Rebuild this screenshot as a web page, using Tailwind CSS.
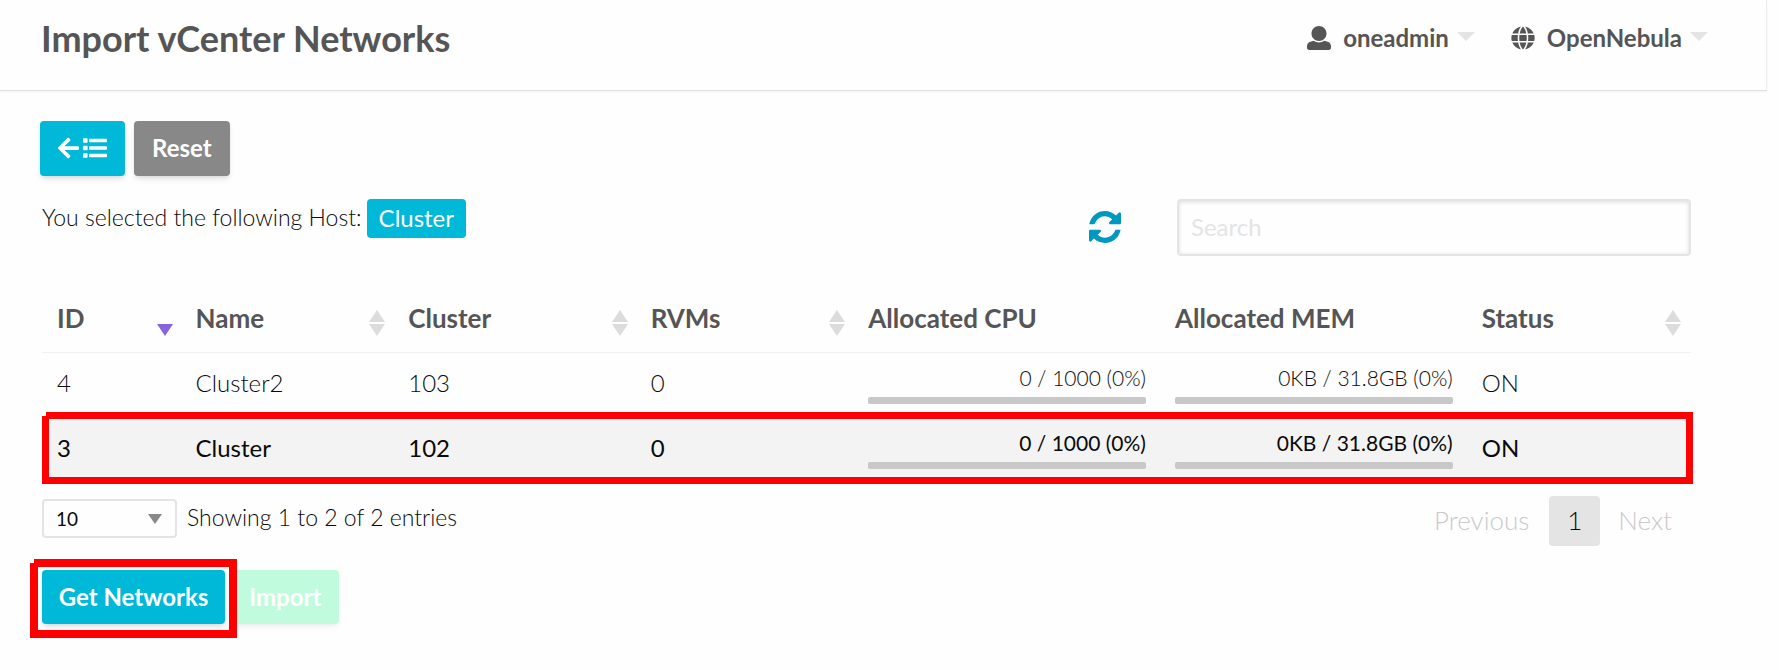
<!DOCTYPE html>
<html lang="en">
<head>
<meta charset="utf-8">
<title>Import vCenter Networks</title>
<script src="https://cdn.jsdelivr.net/npm/@tailwindcss/browser@4"></script>
</head>
<body class="min-h-screen bg-[#fefefe] font-['Lato',sans-serif] text-2xl font-light text-[#0a0a0a]">
<svg class="hidden">
  <symbol id="sort" viewBox="0 0 16 26"><path d="M8 0l8 12H0zM0 14h16L8 26z"/></symbol>
  <symbol id="caret" viewBox="0 0 18 9"><path d="M0 0h18L9 9z"/></symbol>
</svg>

<header class="mr-3 flex h-[91px] items-start justify-between border-r border-b border-r-[#ededed] border-b-[#dfdfdf] pt-[15px] pr-[58px] pl-[41px] shadow-xs">
  <h1 class="text-4xl leading-[46px] font-bold text-[#555]">Import vCenter Networks</h1>
  <nav class="flex h-[46px] items-center gap-9 font-bold text-[#555]">
    <button class="flex items-center">
      <svg class="mr-3 size-6 fill-current" viewBox="0 0 512 512"><path d="M256 0c88.366 0 160 71.634 160 160s-71.634 160-160 160S96 248.366 96 160 167.634 0 256 0zm183.283 333.821l-71.313-17.828c-74.923 53.89-165.738 41.864-223.94 0l-71.313 17.828C29.981 344.505 0 382.903 0 426.955V464c0 26.51 21.49 48 48 48h416c26.51 0 48-21.49 48-48v-37.045c0-44.052-29.981-82.45-72.717-93.134z"/></svg>
      oneadmin
      <svg class="mb-1 ml-2 h-[9px] w-[18px] fill-[#e4e4e4]"><use href="#caret"/></svg>
    </button>
    <button class="flex items-center">
      <svg class="mr-3 size-6 fill-current" viewBox="0 0 512 512"><path d="M364.215 192h131.430c5.439 20.419 8.354 41.868 8.354 64s-2.915 43.581-8.354 64h-131.430c5.154-43.049 4.939-86.746 0-128zM185.214 352c10.678 53.680 33.173 112.514 70.125 151.992h1.322c37.012-39.543 59.467-98.414 70.125-151.992zM359.344 160h125.385C452.802 84.024 384.128 27.305 300.950 12.075c30.238 43.120 48.821 96.332 58.394 147.925zM331.994 192H180.006c-5.339 41.914-5.345 86.037 0 128h151.989c5.339-41.915 5.345-86.037-.001-128zM152.656 352H27.271c31.926 75.976 100.600 132.695 183.778 147.925-30.246-43.136-48.823-96.350-58.393-147.925zM359.344 352c-9.575 51.605-28.163 104.814-58.394 147.925 83.178-15.230 151.852-71.949 183.778-147.925zM147.785 192H16.355C10.915 212.419 8 233.868 8 256s2.915 43.581 8.355 64h131.430c-4.939-41.254-5.154-84.951 0-128zM27.271 160h125.385c9.573-51.593 28.156-104.805 58.394-147.925C127.872 27.305 59.198 84.024 27.271 160zM326.786 160C316.108 106.320 293.613 47.486 256.661 8.008h-1.322C218.327 47.551 195.872 106.422 185.214 160z"/></svg>
      OpenNebula
      <svg class="mb-1 ml-2 h-[9px] w-[18px] fill-[#e4e4e4]"><use href="#caret"/></svg>
    </button>
  </nav>
</header>

<main class="pt-[30px] pr-[88px] pl-[42px]">
  <div class="-ml-0.5 flex gap-[9px] font-bold text-white">
    <button aria-label="Back to list" class="flex h-[55px] w-[85px] items-center justify-center gap-1 rounded-[4px] bg-[#00b8d8] pb-0.5 shadow-md">
      <svg class="h-6 w-[21px] fill-current" viewBox="0 0 448 512"><path d="M257.500 445.100l-22.200 22.200c-9.400 9.400-24.600 9.400-33.900 0L7 273c-9.400-9.400-9.400-24.600 0-33.900L201.400 44.700c9.400-9.400 24.600-9.400 33.900 0l22.200 22.200c9.500 9.500 9.300 25-.4 34.300L136.600 216H424c13.300 0 24 10.700 24 24v32c0 13.300-10.700 24-24 24H136.600l120.500 114.800c9.800 9.300 10 24.800.4 34.300z"/></svg>
      <svg class="size-6 fill-current" viewBox="0 0 512 512"><rect y="48" width="98" height="98" rx="16"/><rect y="208" width="98" height="98" rx="16"/><rect y="368" width="98" height="98" rx="16"/><rect x="128" y="60" width="384" height="72" rx="16"/><rect x="128" y="220" width="384" height="72" rx="16"/><rect x="128" y="380" width="384" height="72" rx="16"/></svg>
    </button>
    <button class="h-[55px] rounded-[4px] bg-[#888] px-[18px] pb-0.5 shadow-md">Reset</button>
  </div>

  <div class="mt-[23px] flex items-start">
    <p class="flex flex-1 items-start gap-[5px] text-[23px] leading-[37px]">You selected the following Host: <span class="rounded-[4px] bg-[#00b8d8] px-3 pb-0.5 text-2xl leading-[37px] font-normal text-white">Cluster</span></p>
    <button aria-label="Refresh" class="mt-3 mr-14 text-[#0098c0]">
      <svg class="size-8 fill-current" viewBox="0 0 1536 1536"><path d="M1511 928q0 5-1 7-64 268-268 434.500T764 1536q-146 0-282.500-55T238 1324l-129 129q-19 19-45 19t-45-19-19-45V960q0-26 19-45t45-19h448q26 0 45 19t19 45-19 45l-137 137q71 66 161 102t187 36q134 0 250-65t186-179q11-17 53-117 8-23 30-23h192q13 0 22.500 9.500t9.500 22.500zM1536 128v448q0 26-19 45t-45 19h-448q-26 0-45-19t-19-45 19-45l138-138Q969 256 768 256q-134 0-250 65T332 500q-11 17-53 117-8 23-30 23H50q-13 0-22.500-9.500T18 608v-7q65-268 270-434.500T768 0q146 0 284 55.500T1297 212l130-129q19-19 45-19t45 19 19 45z"/></svg>
    </button>
    <input type="search" aria-label="Search" placeholder="Search" class="h-[57px] w-[514px] rounded-[4px] border-2 border-[#e4e4e4] bg-[#fefefe] px-3 pb-0.5 font-normal inset-shadow-[0_1px_4px_rgba(0,0,0,0.14)] outline-none placeholder:text-[#e4e4e4]">
  </div>

  <table class="mt-9 w-full table-fixed text-left">
    <colgroup><col class="w-[8.400%]"><col class="w-[12.900%]"><col class="w-[14.700%]"><col class="w-[13.200%]"><col class="w-[18.600%]"><col class="w-[18.600%]"><col></colgroup>
    <thead class="text-[26px] text-[#555]">
      <tr class="h-[60px] border-b border-[#f1f1f1] *:pr-3.5 *:pb-1.5 *:pl-[15px] *:font-bold">
        <th><div class="flex items-center justify-between">ID <svg class="-mr-1.5 mt-2 h-[26px] w-4 fill-[#8a63dc]" viewBox="0 0 16 26"><path d="M0 14h16L8 26z"/></svg></div></th>
        <th><div class="flex items-center justify-between">Name <svg class="-mr-1.5 mt-2 h-[26px] w-4 fill-[#dcdcdc]"><use href="#sort"/></svg></div></th>
        <th><div class="flex items-center justify-between">Cluster <svg class="-mr-1.5 mt-2 h-[26px] w-4 fill-[#dcdcdc]"><use href="#sort"/></svg></div></th>
        <th><div class="flex items-center justify-between">RVMs <svg class="-mr-1.5 mt-2 h-[26px] w-4 fill-[#dcdcdc]"><use href="#sort"/></svg></div></th>
        <th>Allocated CPU</th>
        <th>Allocated MEM</th>
        <th><div class="flex items-center justify-between">Status <svg class="-mr-1 mt-2 h-[26px] w-4 fill-[#dcdcdc]"><use href="#sort"/></svg></div></th>
      </tr>
    </thead>
    <tbody>
      <tr class="h-[65px] *:pr-3.5 *:pb-1 *:pl-[15px]">
        <td>4</td><td>Cluster2</td><td>103</td><td>0</td>
        <td><div class="text-right text-[21px] leading-8">0 / 1000 (0%)</div><div class="mt-[3px] h-[7px] rounded-[2px] bg-[#c8c8c8]"></div></td>
        <td><div class="text-right text-[21px] leading-8">0KB / 31.8GB (0%)</div><div class="mt-[3px] h-[7px] rounded-[2px] bg-[#c8c8c8]"></div></td>
        <td>ON</td>
      </tr>
      <tr class="relative h-[65px] bg-[#f3f3f3] font-normal *:pr-3.5 *:pb-1 *:pl-[15px]">
        <td>3<span class="pointer-events-none absolute -top-[5px] -right-0.5 -bottom-0.5 left-0 border-[7px] border-[#f00] [clip-path:polygon(4px_0,100%_0,100%_100%,0_100%,0_4px,4px_4px)]"></span></td><td>Cluster</td><td>102</td><td>0</td>
        <td><div class="text-right text-[21px] leading-8">0 / 1000 (0%)</div><div class="mt-[3px] h-[7px] rounded-[2px] bg-[#c8c8c8]"></div></td>
        <td><div class="text-right text-[21px] leading-8">0KB / 31.8GB (0%)</div><div class="mt-[3px] h-[7px] rounded-[2px] bg-[#c8c8c8]"></div></td>
        <td>ON</td>
      </tr>
    </tbody>
  </table>

  <div class="mt-3.5 flex items-start justify-between">
    <div class="mt-[3px] flex gap-2.5">
      <div class="relative">
        <select aria-label="Entries per page" class="h-[39px] w-[135px] appearance-none rounded-[4px] border-2 border-[#e4e4e4] bg-[#fefefe] pl-3 text-[19px] font-normal"><option>10</option><option>25</option><option>50</option></select>
        <svg class="pointer-events-none absolute top-[15px] right-[15px] h-2.5 w-3.5 fill-[#888]" viewBox="0 0 14 10"><path d="M0 0h14L7 10z"/></svg>
      </div>
      <span class="text-[23px] leading-9">Showing 1 to 2 of 2 entries</span>
    </div>
    <nav aria-label="Pagination" class="mr-[19px] flex h-[50px] items-center text-[26px]">
      <button disabled class="pb-0.5 text-[#cacaca]">Previous</button>
      <button class="mr-[18px] ml-5 h-full w-[51px] rounded-[4px] bg-[#e4e4e4] pb-0.5">1</button>
      <button disabled class="pb-0.5 text-[#cacaca]">Next</button>
    </nav>
  </div>

  <div class="mt-6 flex gap-1.5 font-bold text-white">
    <div class="relative z-10">
      <button class="h-[54px] w-[183px] rounded-[4px] bg-[#00b8d8] shadow-md">Get Networks</button>
      <span class="pointer-events-none absolute -top-[11px] -right-3 -bottom-3.5 -left-3 border-8 border-[#f00] [clip-path:polygon(4px_0,100%_0,100%_100%,0_100%,0_4px,4px_4px)]"></span>
    </div>
    <button disabled class="h-[54px] rounded-[4px] bg-[#bffbdc] px-[18px] shadow-md shadow-black/5">Import</button>
  </div>
</main>
</body>
</html>
